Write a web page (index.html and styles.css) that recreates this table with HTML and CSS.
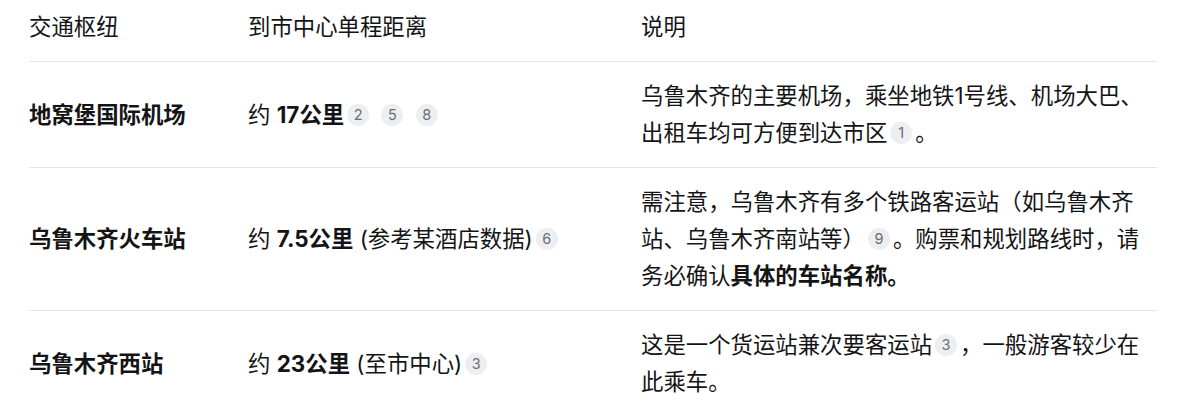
FILE: index.html
```html
<!DOCTYPE html>
<html lang="zh-CN">
<head>
<meta charset="utf-8">
<title>乌鲁木齐交通枢纽</title>
<link rel="stylesheet" href="styles.css">
</head>
<body>
<div class="page">
  <table class="hub-table">
    <colgroup>
      <col class="col-name">
      <col class="col-dist">
      <col class="col-desc">
    </colgroup>
    <thead>
      <tr>
        <th>交通枢纽</th>
        <th>到市中心单程距离</th>
        <th>说明</th>
      </tr>
    </thead>
    <tbody>
      <tr>
        <td class="name">地窝堡国际机场</td>
        <td>约 <strong>17公里</strong><span class="cite">2</span> <span class="cite">5</span> <span class="cite">8</span></td>
        <td>乌鲁木齐的主要机场，乘坐地铁1号线、机场大巴、出租车均可方便到达市区<span class="cite">1</span>。</td>
      </tr>
      <tr>
        <td class="name">乌鲁木齐火车站</td>
        <td>约 <strong>7.5公里</strong> (参考某酒店数据)<span class="cite">6</span></td>
        <td>需注意，乌鲁木齐有多个铁路客运站（如乌鲁木齐站、乌鲁木齐南站等）<span class="cite">9</span>。购票和规划路线时，请务必确认<strong>具体的车站名称。</strong></td>
      </tr>
      <tr>
        <td class="name">乌鲁木齐西站</td>
        <td>约 <strong>23公里</strong> (至市中心)<span class="cite">3</span></td>
        <td>这是一个货运站兼次要客运站<span class="cite">3</span>，一般游客较少在此乘车。</td>
      </tr>
    </tbody>
  </table>
</div>
</body>
</html>
```

FILE: styles.css
```css
html, body {
  margin: 0;
  padding: 0;
  background: #ffffff;
}

body {
  font-family: Inter, "Noto Sans CJK SC", sans-serif;
  font-size: 22.4px;
  line-height: 37px;
  color: #141416;
}

.page {
  padding: 0 22px 0 29px;
}

.hub-table {
  width: 1128px;
  border-collapse: collapse;
  table-layout: fixed;
}

.col-name { width: 219px; }
.col-dist { width: 393px; }
.col-desc { width: 516px; }

.hub-table th,
.hub-table td {
  text-align: left;
  vertical-align: middle;
  padding: 15px 16px 16px 0;
}

.hub-table th:last-child,
.hub-table td:last-child {
  padding-right: 0;
}

.hub-table th {
  font-weight: 400;
  padding-top: 8px;
  border-bottom: 1px solid #e4e4e7;
}

.hub-table tbody tr + tr td {
  border-top: 1px solid #e4e4e7;
}

.name,
.hub-table strong {
  font-weight: 700;
}

.cite {
  display: inline-flex;
  align-items: center;
  justify-content: center;
  width: 22px;
  height: 22px;
  margin: 0 3px;
  border-radius: 50%;
  background: #eceef1;
  color: #6b6e74;
  font-family: Inter, sans-serif;
  font-size: 14.5px;
  line-height: 1;
  font-weight: 400;
  vertical-align: 3px;
}
```
